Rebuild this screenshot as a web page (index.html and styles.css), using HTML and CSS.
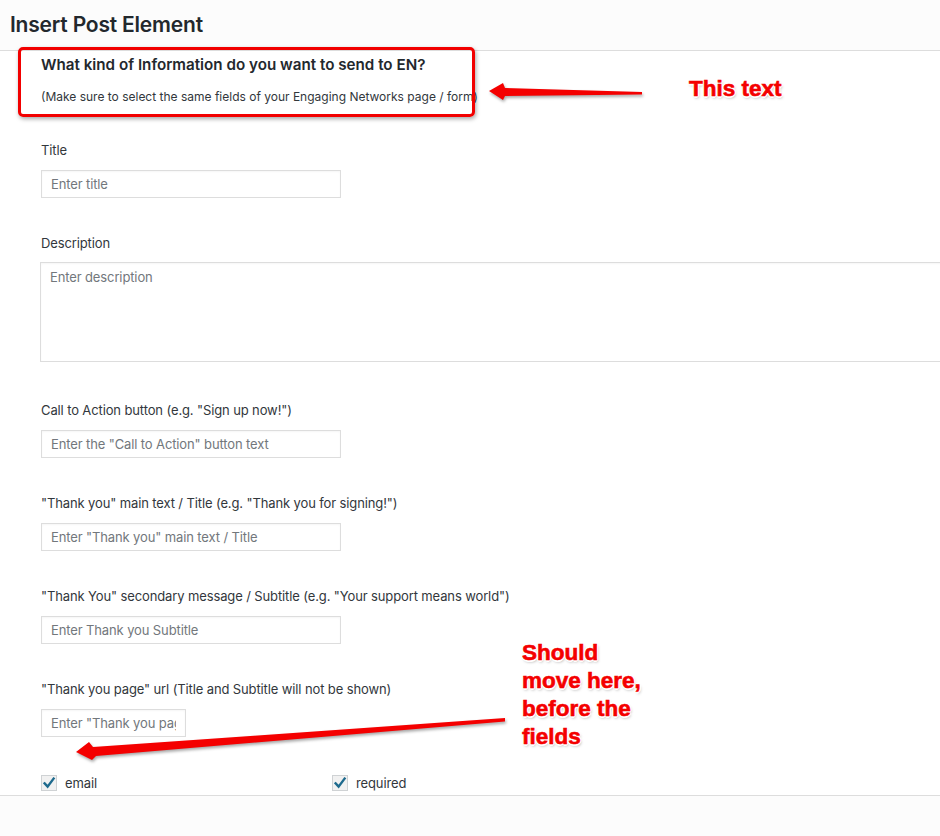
FILE: index.html
```html
<!DOCTYPE html>
<html>
    <head>
        <title>Insert Post Element</title>
        <link rel="stylesheet" href="styles.css">
    </head>
    <body>
        <div class="modal">
            <header class="modal-header">
                <h1>Insert Post Element</h1>
            </header>

            <div class="modal-body">
                <div class="intro">
                    <h3>What kind of Information do you want to send to EN?</h3>
                    <p>(Make sure to select the same fields of your Engaging Networks page / form)</p>
                </div>

                <div class="field">
                    <label>Title</label>
                    <input type="text" placeholder="Enter title">
                </div>
                <div class="field field-wide">
                    <label>Description</label>
                    <textarea placeholder="Enter description"></textarea>
                </div>
                <div class="field">
                    <label>Call to Action button (e.g. "Sign up now!")</label>
                    <input type="text" placeholder='Enter the "Call to Action" button text'>
                </div>
                <div class="field">
                    <label>"Thank you" main text / Title (e.g. "Thank you for signing!")</label>
                    <input type="text" placeholder='Enter "Thank you" main text / Title'>
                </div>
                <div class="field">
                    <label>"Thank You" secondary message / Subtitle (e.g. "Your support means world")</label>
                    <input type="text" placeholder="Enter Thank you Subtitle">
                </div>
                <div class="field">
                    <label>"Thank you page" url (Title and Subtitle will not be shown)</label>
                    <input type="text" class="input-short" placeholder='Enter "Thank you page" url'>
                </div>

                <div class="checks">
                    <div class="check-item">
                        <span class="check"><svg viewBox="0 0 16 16" width="16" height="16"><path d="M3.6 8.4 L6.6 11.6 L12.6 3.6" /></svg></span>
                        email
                    </div>
                    <div class="check-item">
                        <span class="check"><svg viewBox="0 0 16 16" width="16" height="16"><path d="M3.6 8.4 L6.6 11.6 L12.6 3.6" /></svg></span>
                        required
                    </div>
                </div>
            </div>

            <footer class="modal-footer"></footer>

            <!-- review annotations drawn over the screenshot -->
            <div class="mark-box"></div>
            <svg class="arrows" width="940" height="836" viewBox="0 0 940 836">
                <polygon points="489,91 503,83 505,88 642,92 642,94.5 505,96 503,100" />
                <polygon points="76,752 89,742 93,747 505,718 505,721.5 96,756 92,760" />
            </svg>
            <div class="note note-top">This text</div>
            <div class="note note-bottom">Should<br>move here,<br>before the<br>fields</div>
        </div>
    </body>
</html>
```

FILE: styles.css
```css
html, body {
    margin: 0;
    height: 100%;
}
body {
    font-family: Inter, "Liberation Sans", Arial, sans-serif;
    font-size: 13px;
    letter-spacing: -0.12px;
    color: #32373c;
    background: #fff;
}
.modal {
    position: relative;
    width: 940px;
    height: 836px;
    display: flex;
    flex-direction: column;
    overflow: hidden;
}
.modal-header {
    height: 50px;
    background: #fcfcfc;
    border-bottom: 1px solid #dddddd;
    padding-left: 10px;
    flex: none;
}
.modal-header h1 {
    margin: 0;
    font-size: 21px;
    line-height: 50px;
    font-weight: 600;
    color: #23282d;
    letter-spacing: -0.2px;
}
.modal-body {
    flex: 1;
    overflow: hidden;
    padding-left: 41px;
}
.intro h3 {
    margin: 4px 0 0;
    font-size: 15.2px;
    line-height: 20px;
    font-weight: 600;
    letter-spacing: 0;
    color: #23282d;
}
.intro p {
    margin: 13px 0 0;
    font-size: 12px;
    line-height: 18px;
    letter-spacing: 0;
    color: #32373c;
}
.field {
    margin-top: 35px;
}
.intro + .field {
    margin-top: 34px;
}
.field-wide {
    padding-bottom: 3px;
}
.field label {
    display: block;
    line-height: 20px;
    margin-bottom: 10px;
}
.field input,
.field textarea {
    display: block;
    box-sizing: border-box;
    width: 300px;
    height: 28px;
    margin: 0;
    padding: 0 9px;
    border: 1px solid #dddddd;
    border-radius: 0;
    box-shadow: inset 0 1px 2px rgba(0, 0, 0, .04);
    font-family: inherit;
    font-size: 13px;
    letter-spacing: -0.12px;
    color: #32373c;
    background: #fff;
    outline: none;
}
.field textarea {
    width: 920px;
    height: 100px;
    margin: -1px 0 0 -1px;
    padding: 6px 9px;
    resize: none;
}
.field input::placeholder,
.field textarea::placeholder {
    color: #72777c;
}
.field .input-short {
    width: 145px;
}
.checks {
    margin-top: 38px;
    display: grid;
    grid-template-columns: 291px 291px;
}
.check-item {
    display: flex;
    align-items: center;
    gap: 8px;
    line-height: 16px;
}
.check {
    box-sizing: border-box;
    width: 16px;
    height: 16px;
    border: 1px solid #cfd2d4;
    background: #f1f1f1;
    display: flex;
    align-items: center;
    justify-content: center;
}
.check svg {
    margin: -1px;
}
.check path {
    fill: none;
    stroke: #1e6a8d;
    stroke-width: 2.4;
    stroke-linecap: square;
}
.modal-footer {
    height: 40px;
    flex: none;
    background: #fcfcfc;
    border-top: 1px solid #dddddd;
}

/* annotations */
.mark-box {
    position: absolute;
    left: 18px;
    top: 47px;
    width: 451px;
    height: 64px;
    border: 3px solid #f20000;
    border-radius: 5px;
    box-shadow: 1px 2px 4px rgba(0, 0, 0, .35);
}
.arrows {
    position: absolute;
    left: 0;
    top: 0;
    filter: drop-shadow(1px 2px 1.5px rgba(0, 0, 0, .35));
}
.arrows polygon {
    fill: #f40000;
}
.note {
    position: absolute;
    font-family: "Liberation Sans", Arial, sans-serif;
    font-weight: bold;
    font-size: 22.5px;
    line-height: 28px;
    color: #f40000;
    letter-spacing: 0;
    -webkit-text-stroke: 0.6px #f40000;
    text-shadow:
        -1px -1px 0 #fff, 1px -1px 0 #fff, -1px 1px 0 #fff, 1px 1px 0 #fff,
        0 -1.6px 0 #fff, 0 1.6px 0 #fff, -1.6px 0 0 #fff, 1.6px 0 0 #fff,
        1px 2px 3px rgba(0, 0, 0, .35);
}
.note-top {
    left: 689px;
    top: 75px;
}
.note-bottom {
    left: 522px;
    top: 639px;
}
```
